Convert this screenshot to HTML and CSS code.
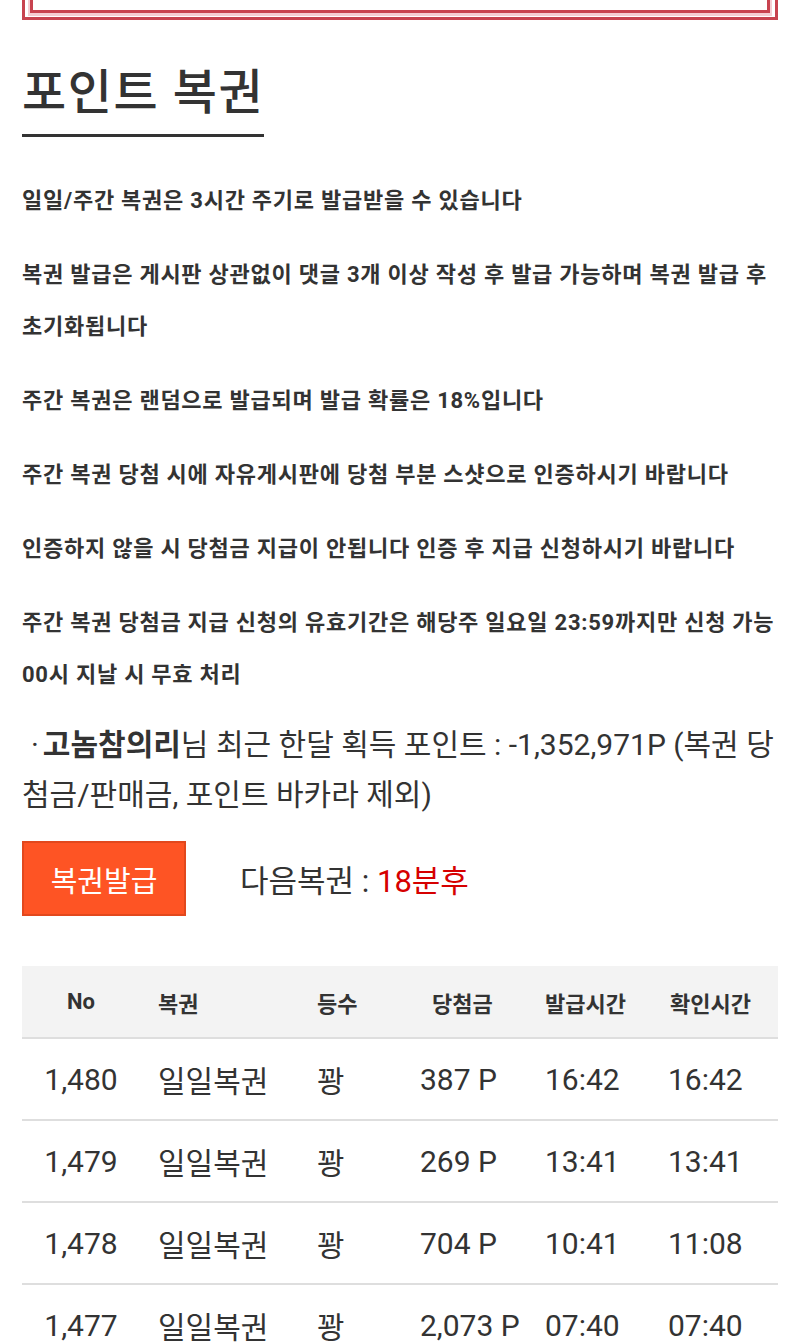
FILE: index.html
```html
<!DOCTYPE html>
<html lang="ko">
<head>
<meta charset="utf-8">
<title>포인트 복권</title>
<link rel="stylesheet" href="styles.css">
</head>
<body>
<div class="page">
  <div class="frame"><div class="frame-inner"></div></div>

  <h2 class="title">포인트 복권</h2>

  <div class="notes">
    <p>일일/주간 복권은 3시간 주기로 발급받을 수 있습니다</p>
    <p>복권 발급은 게시판 상관없이 댓글 3개 이상 작성 후 발급 가능하며 복권 발급 후 초기화됩니다</p>
    <p>주간 복권은 랜덤으로 발급되며 발급 확률은 18%입니다</p>
    <p>주간 복권 당첨 시에 자유게시판에 당첨 부분 스샷으로 인증하시기 바랍니다</p>
    <p>인증하지 않을 시 당첨금 지급이 안됩니다 인증 후 지급 신청하시기 바랍니다</p>
    <p>주간 복권 당첨금 지급 신청의 유효기간은 해당주 일요일 23:59까지만 신청 가능 00시 지날 시 무효 처리</p>
  </div>

  <p class="user-info"><span class="dot">·</span><strong>고놈참의리</strong>님 최근 한달 획득 포인트 : -1,352,971P (복권 당첨금/판매금, 포인트 바카라 제외)</p>

  <div class="issue-row">
    <button class="issue-btn" type="button">복권발급</button>
    <span class="next">다음복권 : <em>18분후</em></span>
  </div>

  <table class="lotto">
    <colgroup>
      <col class="c-no"><col class="c-name"><col class="c-rank"><col class="c-prize"><col class="c-issue"><col class="c-check">
    </colgroup>
    <thead>
      <tr><th class="center">No</th><th>복권</th><th>등수</th><th class="prize-h">당첨금</th><th>발급시간</th><th class="check-h">확인시간</th></tr>
    </thead>
    <tbody>
      <tr><td class="center">1,480</td><td>일일복권</td><td>꽝</td><td>387 P</td><td>16:42</td><td>16:42</td></tr>
      <tr><td class="center">1,479</td><td>일일복권</td><td>꽝</td><td>269 P</td><td>13:41</td><td>13:41</td></tr>
      <tr><td class="center">1,478</td><td>일일복권</td><td>꽝</td><td>704 P</td><td>10:41</td><td>11:08</td></tr>
      <tr><td class="center">1,477</td><td>일일복권</td><td>꽝</td><td>2,073 P</td><td>07:40</td><td>07:40</td></tr>
    </tbody>
  </table>
</div>
</body>
</html>
```

FILE: styles.css
```css
* { box-sizing: border-box; }
html, body { margin: 0; padding: 0; background: #fff; }
body {
  font-family: Roboto, "Noto Sans CJK KR", sans-serif;
  color: #333;
}
.page { padding: 0 22px; }

.frame {
  height: 20px;
  border: 3px solid #c8434f;
  border-top: none;
  padding: 0 5px 4px;
}
.frame-inner {
  height: 100%;
  border: 3px solid #c8434f;
  border-top: none;
  box-shadow: 0 1px 0 2px #f5cdd2;
}

.title {
  display: inline-block;
  margin: 40px 0 0;
  padding-bottom: 8px;
  font-size: 48px;
  font-weight: 500;
  letter-spacing: 1.6px;
  line-height: 66px;
  color: #333;
  border-bottom: 3px solid #333;
}

.notes {
  display: flex;
  flex-direction: column;
  gap: 22px;
  margin-top: 38px;
}
.notes p {
  margin: 0;
  font-size: 22px;
  font-weight: 700;
  letter-spacing: 0.75px;
  line-height: 52px;
  color: #333;
}

.user-info {
  margin: 19px 0 0;
  font-size: 30px;
  line-height: 50px;
  color: #333;
}
.user-info .dot {
  display: inline-block;
  margin: 0 4px 0 9px;
}
.user-info strong { font-weight: 700; }

.issue-row {
  display: flex;
  align-items: center;
  gap: 54px;
  margin-top: 21px;
}
.issue-btn {
  width: 164px;
  height: 75px;
  background: #fe5424;
  border: 2px solid #e2481d;
  color: #fff;
  font-family: inherit;
  font-size: 29px;
  padding: 0;
}
.next {
  font-size: 31px;
  color: #333;
}
.next em { font-style: normal; color: #d60000; }

.lotto {
  width: 100%;
  margin-top: 50px;
  border-collapse: collapse;
  table-layout: fixed;
}
.c-no { width: 118px; }
.c-name { width: 159px; }
.c-rank { width: 103px; }
.c-prize { width: 125px; }
.c-issue { width: 123px; }
.c-check { width: 128px; }

.lotto th {
  height: 72px;
  background: #f3f3f3;
  border-bottom: 2px solid #dedede;
  font-size: 22px;
  font-weight: 700;
  text-align: left;
  padding: 0 0 0 18px;
  color: #333;
}
.lotto th.center, .lotto td.center { text-align: center; padding-left: 0; }
.lotto th.prize-h { padding-left: 30px; }
.lotto th.check-h { padding-left: 20px; }
.lotto td {
  height: 82px;
  border-bottom: 2px solid #dedede;
  font-size: 30px;
  text-align: left;
  padding: 0 0 0 18px;
  color: #333;
  white-space: nowrap;
}
```
